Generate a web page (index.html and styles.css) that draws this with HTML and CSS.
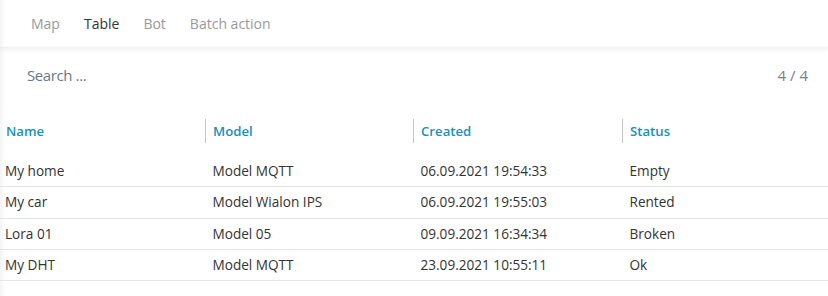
FILE: index.html
```html
<!DOCTYPE html>
<html lang="en">
<head>
<meta charset="UTF-8">
<title>Objects</title>
<link rel="stylesheet" href="styles.css">
</head>
<body>

<div class="tabs">
    <a class="tab">Map</a>
    <a class="tab active">Table</a>
    <a class="tab">Bot</a>
    <a class="tab">Batch action</a>
</div>

<div class="panel">
    <div class="search-row">
        <span class="search">Search ...</span>
        <span class="count">4 / 4</span>
    </div>

    <table class="grid">
        <thead>
            <tr>
                <th>Name</th>
                <th>Model</th>
                <th>Created</th>
                <th>Status</th>
            </tr>
        </thead>
        <tbody>
            <tr><td>My home</td><td>Model MQTT</td><td>06.09.2021 19:54:33</td><td>Empty</td></tr>
            <tr><td>My car</td><td>Model Wialon IPS</td><td>06.09.2021 19:55:03</td><td>Rented</td></tr>
            <tr><td>Lora 01</td><td>Model 05</td><td>09.09.2021 16:34:34</td><td>Broken</td></tr>
            <tr><td>My DHT</td><td>Model MQTT</td><td>23.09.2021 10:55:11</td><td>Ok</td></tr>
        </tbody>
    </table>
</div>

</body>
</html>
```

FILE: styles.css
```css
body {
    font-family: "Open Sans", sans-serif;
    background-color: #fff;
    margin: 0;
    padding: 0;
    height: 296px;
    box-shadow: inset 5px 0 5px -3px rgba(0, 0, 0, 0.06);
}

.tabs {
    display: flex;
    align-items: center;
    height: 46px;
    padding-bottom: 1px;
    padding-left: 31px;
    gap: 24px;
    background-color: #fff;
    box-shadow: 0 2px 5px rgba(0, 0, 0, 0.08), inset 5px 0 5px -3px rgba(0, 0, 0, 0.06);
}

.tab {
    font-size: 14px;
    color: #999;
    cursor: pointer;
}

.tab.active {
    color: #333;
}

.panel {
    padding-top: 5px;
}

.search-row {
    display: flex;
    justify-content: space-between;
    align-items: center;
    height: 45px;
    padding: 0 20px 1px 27px;
}

.search {
    font-size: 15px;
    color: #6b7886;
    letter-spacing: -0.4px;
}

.count {
    font-size: 15px;
    color: #7a7f85;
}

.grid {
    width: 828px;
    border-collapse: collapse;
    margin-top: 21px;
    table-layout: fixed;
}

.grid th {
    text-align: left;
    font-size: 13.2px;
    font-weight: 600;
    color: #1b8fbb;
    padding: 0 6px 0 7px;
    height: 24px;
    border-left: 1px solid #c4c4c4;
}

.grid th:first-child {
    border-left: none;
    padding-left: 6px;
}

.grid td {
    font-size: 13.6px;
    line-height: 18.3px;
    color: #333;
    padding: 6px 6px 6px 7px;
    border-bottom: 1px solid #e6e6e6;
}

.grid td:first-child {
    padding-left: 5px;
}

.grid tbody tr:first-child td {
    padding-top: 19px;
}

.grid th:nth-child(1), .grid td:nth-child(1) { width: 193px; }
.grid th:nth-child(2), .grid td:nth-child(2) { width: 194px; }
.grid th:nth-child(3), .grid td:nth-child(3) { width: 195px; }
```
